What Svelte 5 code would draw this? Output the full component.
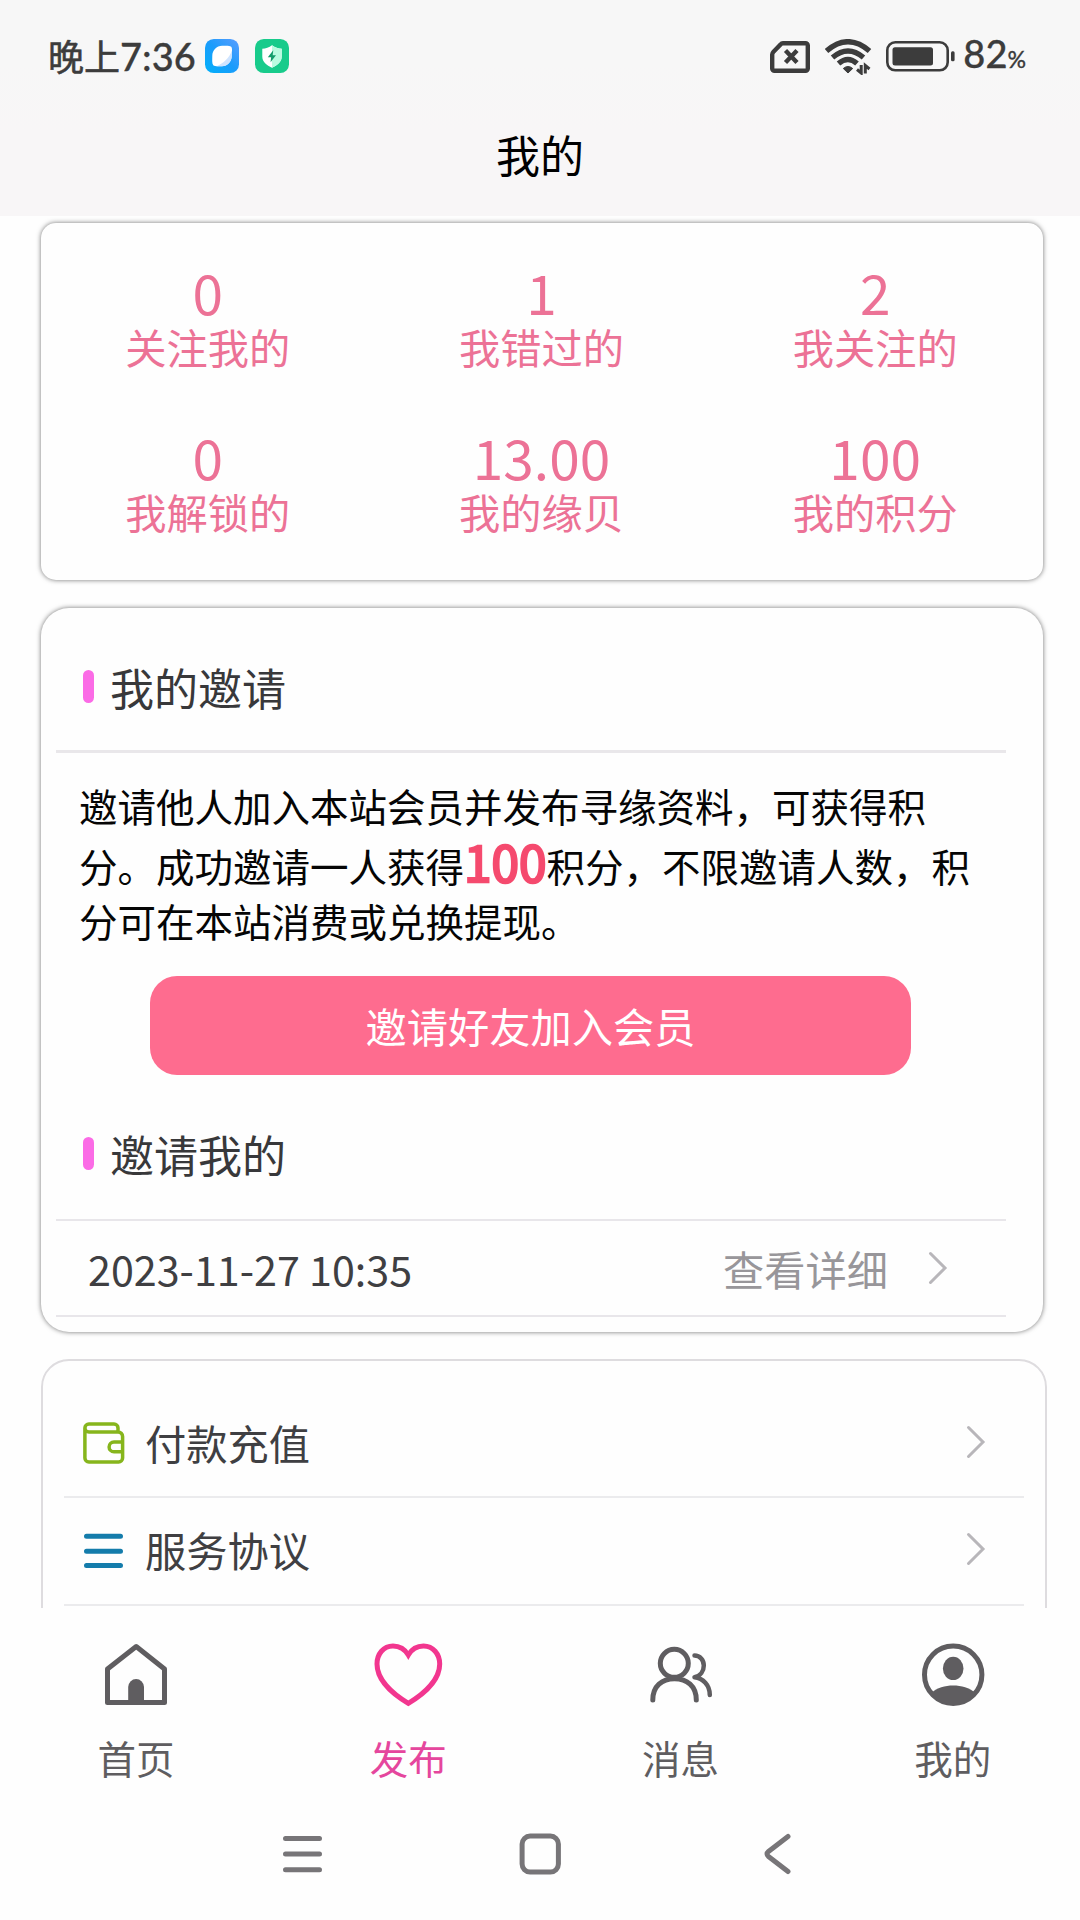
<script>
  const stats = [
    { value: '0', label: '关注我的' },
    { value: '1', label: '我错过的' },
    { value: '2', label: '我关注的' },
    { value: '0', label: '我解锁的' },
    { value: '13.00', label: '我的缘贝' },
    { value: '100', label: '我的积分' }
  ]
  const menu = [
    { icon: 'wallet', label: '付款充值' },
    { icon: 'list', label: '服务协议' }
  ]
  const tabs = [
    { icon: 'home', label: '首页' },
    { icon: 'heart', label: '发布', active: true },
    { icon: 'users', label: '消息' },
    { icon: 'person', label: '我的' }
  ]
</script>

{#snippet chevron()}
  <svg class="chevron" width="20" height="34" viewBox="0 0 20 34">
    <path d="M2.5 2.5 L17 17 L2.5 31.5" />
  </svg>
{/snippet}

<div class="page">
  <header>
    <div class="status">
      <span class="clock"><span class="cjk">晚上</span>7:36</span>
      <svg class="app" width="34" height="34" viewBox="0 0 35 35">
        <defs>
          <linearGradient id="blue" x1="0" y1="1" x2="1" y2="0">
            <stop offset="0" stop-color="#00b0fa" />
            <stop offset="0.5" stop-color="#1b9cfb" />
            <stop offset="1" stop-color="#5a9dff" />
          </linearGradient>
        </defs>
        <rect width="35" height="35" rx="9" fill="url(#blue)" />
        <path d="M17.5 7 C21 7 25 6.5 27 8 C28.5 10 27.500 14 27.500 17.500 C27.500 23.500 23 28 17.500 28 C14 28 10 28.500 8.500 27 C7 25 7.500 21 7.500 17.500 C7.500 11.500 12 7 17.500 7Z" fill="#fff" />
        <path d="M27.500 17.500 C27.500 23.500 23 28 17.500 28 C16 28 14 28.300 12 28 C19 25 25 19 27.700 12Z" fill="#cfe4ff" />
      </svg>
      <svg class="app second" width="34" height="34" viewBox="0 0 35 35">
        <rect width="35" height="35" rx="9" fill="#18cb8b" />
        <path d="M17.500 6.500 C20.500 9 24 10 27.500 10 V18 C27.500 23.500 23 27 17.500 29.500 C12 27 7.500 23.500 7.500 18 V10 C11 10 14.500 9 17.500 6.500Z" fill="#fff" />
        <path d="M17.500 6.500 C20.500 9 24 10 27.500 10 V18 C27.500 23.500 23 27 17.500 29.500Z" fill="#b9fbe0" />
        <path d="M18.800 11.500 L13.200 18.800 H16.600 L16 24 L21.600 16.600 H18.200Z" fill="#129c6b" />
      </svg>

      <svg class="sim" width="40" height="32" viewBox="0 0 40 32">
        <path d="M13 2.200 H35.500 A2.300 2.300 0 0 1 37.800 4.500 V27.500 A2.300 2.300 0 0 1 35.500 29.800 H4.500 A2.300 2.300 0 0 1 2.200 27.500 V13.500 Q2.200 12 3.500 10.700 L10.500 3.500 Q11.500 2.200 13 2.200Z" />
        <path d="M15.500 9.500 L27 21.500 M27 9.500 L15.500 21.500" />
      </svg>
      <svg class="wifi" width="47" height="36" viewBox="0 0 47 36">
        <path d="M1.500 12 Q23 -6.500 44.500 12" />
        <path d="M7.500 18.500 Q23 5.500 38.500 18.500" />
        <path d="M13.500 24.500 Q23 16.500 32 24.500" />
        <path class="solid" d="M18.300 29.500 Q23 25.500 27.700 29.500 L23 34Z" />
        <path class="arrows" d="M36.200 26 V34 L32 30.500 M40.300 34.500 V26.500 L44.500 30" />
      </svg>
      <svg class="battery" width="69" height="31" viewBox="0 0 69 31">
        <rect x="1.300" y="1.300" width="60.400" height="28" rx="8" fill="none" stroke="#3c3c3c" stroke-width="2.600" />
        <rect x="6.500" y="6.200" width="40.500" height="18.200" rx="2.500" fill="#3c3c3c" />
        <rect x="65" y="10.300" width="3.600" height="10" rx="1.500" fill="#3c3c3c" />
      </svg>
      <span class="percent">82<small>%</small></span>
    </div>
    <h1>我的</h1>
  </header>

  <main>
    <section class="card stats">
      {#each stats as stat}
        <div class="stat">
          <div class="value">{stat.value}</div>
          <div class="label">{stat.label}</div>
        </div>
      {/each}
    </section>

    <section class="card invite">
      <h2 class="thick">我的邀请</h2>
      <p>邀请他人加入本站会员并发布寻缘资料，可获得积分。成功邀请一人获得<b>100</b>积分，不限邀请人数，积分可在本站消费或兑换提现。</p>
      <button>邀请好友加入会员</button>
      <h2>邀请我的</h2>
      <div class="record">
        <span class="date">2023-11-27 10:35</span>
        <span class="detail">查看详细</span>
        {@render chevron()}
      </div>
    </section>

    <section class="menu">
      {#each menu as item}
        <div class="item">
          {#if item.icon === 'wallet'}
            <svg width="42" height="42" viewBox="0 0 42 42" fill="none" stroke="#86b51c" stroke-width="3.500">
              <path d="M1.900 6 V36 A4 4 0 0 0 5.900 40 H35.600 A4 4 0 0 0 39.600 36 V14.500 A4.500 4.500 0 0 0 35.100 10 H5.900 A4 4 0 0 1 5.900 2 H31 A4 4 0 0 1 35 6 V10" />
              <path d="M39.600 20 H31 A4.900 4.900 0 0 0 31 29.800 H39.600" />
            </svg>
          {:else}
            <svg width="42" height="42" viewBox="0 0 42 42" fill="none" stroke="#147cab" stroke-width="5" stroke-linecap="round">
              <path d="M3.500 6.300 H37.500 M3.500 21.200 H37.500 M3.500 35.500 H37.500" />
            </svg>
          {/if}
          <span>{item.label}</span>
          {@render chevron()}
        </div>
      {/each}
    </section>
  </main>

  <nav>
    {#each tabs as tab}
      <div class="tab" class:active={tab.active}>
        <svg width="72" height="66" viewBox="0 0 72 66">
          {#if tab.icon === 'home'}
            <path d="M36.200 4.500 L64.500 27 V60.500 H7.500 V27Z" />
            <path class="fill" d="M28.200 61 V45 A7.900 7.900 0 0 1 44 45 V61Z" />
          {:else if tab.icon === 'heart'}
            <path d="M36.300 13 C33 7.500 27.500 4 21 4 C11.500 4 5 12 5 22 C5 37 19 51 36.300 61.300 C53.600 51 67.700 37 67.700 22 C67.700 12 61 4 51.500 4 C45 4 39.500 7.500 36.300 13Z" />
          {:else if tab.icon === 'users'}
            <circle cx="29.300" cy="21.300" r="14" />
            <path d="M7.800 58 C7.800 44 17 36.800 29.500 36.800 S51.300 44 51.300 58" />
            <path class="thin" d="M49.500 13.500 C55 13.500 58.800 18 58.800 23.500 C58.800 29 55.500 34 49.500 35.300 C58 36.300 64.800 43 64.800 53" />
          {:else}
            <circle cx="36.200" cy="32.800" r="28.700" />
            <ellipse class="fill" cx="36.200" cy="26.400" rx="10.300" ry="11.700" />
            <path class="fill" d="M14.500 51 C20 45.500 28 43.500 36.200 43.500 S52.500 45.500 58 51 C53 58 45 62.500 36.200 62.500 S19.500 58 14.500 51Z" />
          {/if}
        </svg>
        <span>{tab.label}</span>
      </div>
    {/each}
  </nav>

  <footer>
    <svg width="42" height="42" viewBox="0 0 42 42"><path d="M4.500 5.500 H38.500 M4.500 21.100 H38.500 M4.500 36.700 H38.500" /></svg>
    <svg width="42" height="42" viewBox="0 0 42 42"><rect x="3.100" y="3.100" width="36.300" height="36" rx="8" /></svg>
    <svg width="42" height="42" viewBox="0 0 42 42"><path d="M31 3.500 L11.500 18.500 Q8.500 21 11.500 23.500 L31 38.500" /></svg>
  </footer>
</div>

<style>
  :global(body) {
    margin: 0;
    background: #fefefe;
  }
  .page {
    width: 1080px;
    height: 1920px;
    overflow: hidden;
    display: flex;
    flex-direction: column;
    font-family: "Noto Sans CJK SC", sans-serif;
    color: #3f3f42;
  }
  svg {
    flex: none;
    display: block;
  }

  header {
    flex: none;
    height: 216px;
    background: linear-gradient(#f7f7f7 30%, #f8f6f7 60%);
  }
  .status {
    display: flex;
    align-items: center;
    height: 111px;
    padding: 0 54px 0 48px;
    color: #3c3c3c;
  }
  .clock, .percent {
    font-family: Lato, sans-serif;
    font-weight: 500;
    font-size: 38px;
    line-height: 48px;
    -webkit-text-stroke: 0.3px #3c3c3c;
    white-space: nowrap;
  }
  .clock {
    width: 156.5px;
  }
  .cjk {
    font-family: "Noto Sans CJK SC", sans-serif;
    font-size: 36px;
    font-weight: 400;
    line-height: 40px;
    -webkit-text-stroke: 0.6px #3c3c3c;
  }
  .percent small {
    font-size: 23px;
  }
  .app.second {
    margin-left: 16px;
  }
  .sim {
    margin: 3px 0 0 auto;
    fill: none;
    stroke: #3c3c3c;
    stroke-width: 4.4;
  }
  .wifi {
    margin: 2px 0 0 15px;
    fill: none;
    stroke: #3c3c3c;
    stroke-width: 5.4;
  }
  .wifi .solid {
    fill: #3c3c3c;
    stroke-width: 1;
  }
  .wifi .arrows {
    stroke-width: 3;
  }
  .battery {
    margin: 1px 8px 0 14px;
  }
  h1 {
    margin: 13px 0 0;
    font-size: 44px;
    font-weight: 400;
    line-height: 60px;
    text-align: center;
    color: #000;
  }

  main {
    flex: none;
    height: 1392px;
    overflow: hidden;
  }
  .card {
    box-sizing: border-box;
    width: 1002px;
    margin-left: 41px;
    background: #fefefe;
    box-shadow: 0 0 5px rgba(0, 0, 0, 0.55);
  }
  .stats {
    display: grid;
    grid-template-columns: repeat(3, 1fr);
    grid-auto-rows: 165px;
    height: 357px;
    margin-top: 7px;
    padding: 38px 1px 0 0;
    border-radius: 15px;
    text-align: center;
    color: #ec7296;
  }
  .value {
    font-size: 55px;
    line-height: 60px;
  }
  .label {
    font-size: 41.25px;
    line-height: 50px;
  }

  .invite {
    height: 724px;
    margin-top: 27.5px;
    padding: 16px 37px 0 15px;
    border-radius: 28px;
  }
  h2 {
    display: flex;
    align-items: center;
    box-sizing: border-box;
    height: 130px;
    margin: 0;
    padding: 0 0 2px 27px;
    border-bottom: 2px solid #e8e6ea;
    font-size: 44px;
    font-weight: 400;
    line-height: 60px;
    color: #38383a;
  }
  h2::before {
    content: "";
    width: 11px;
    height: 33px;
    margin-right: 16px;
    border-radius: 5.5px;
    background: #fb6be6;
  }
  h2.thick {
    height: 129px;
    padding-bottom: 0;
    border-bottom: 3px solid #e9e7ea;
  }
  p {
    width: 905px;
    margin: 25px 0 0 23px;
    font-size: 38.5px;
    line-height: 55px;
    color: #050505;
  }
  b {
    font-size: 49.5px;
    font-weight: 400;
    line-height: 55px;
    color: #f54a6e;
    -webkit-text-stroke: 2.4px #f54a6e;
  }
  button {
    display: block;
    width: 761px;
    height: 99px;
    margin: 28px 0 16px 94px;
    padding: 0;
    border: 0;
    border-radius: 27px;
    background: #fe6c8f;
    color: #fff;
    font-family: inherit;
    font-size: 41.25px;
    line-height: 99px;
  }
  .record {
    display: flex;
    align-items: center;
    height: 94px;
    padding: 0 58px 0 32px;
    border-bottom: 2px solid #e8e6ea;
    font-size: 41.25px;
    line-height: 60px;
  }
  .detail {
    margin: 0 40px 0 auto;
    color: #98969a;
  }
  .chevron {
    fill: none;
    stroke: #b8b6ba;
    stroke-width: 3;
    stroke-linecap: round;
  }

  .menu {
    box-sizing: border-box;
    width: 1006px;
    height: 400px;
    margin: 27px 0 0 41px;
    padding: 30px 21px 0;
    border: 2px solid #dedcdf;
    border-radius: 28px;
  }
  .item {
    display: flex;
    align-items: center;
    box-sizing: border-box;
    height: 107.5px;
    padding: 0 38px 0 19px;
    border-bottom: 2px solid #ebebed;
    font-size: 41.25px;
    line-height: 60px;
  }
  .item span {
    flex: 1;
    margin: 0 0 3px 20px;
  }
  .item .chevron {
    margin-bottom: 3px;
  }

  /* the tab bar runs a little past the right edge of the screen */
  nav {
    flex: none;
    display: flex;
    width: 1089px;
    height: 192px;
  }
  .tab {
    flex: 1;
    display: flex;
    flex-direction: column;
    align-items: center;
    padding-top: 34px;
    font-size: 38.5px;
    line-height: 50px;
    color: #5f5d60;
  }
  .tab span {
    margin-top: 24px;
  }
  .tab svg {
    fill: none;
    stroke: #5f5d60;
    stroke-width: 5;
    stroke-linecap: round;
    stroke-linejoin: round;
  }
  .tab .fill {
    fill: #5f5d60;
    stroke: none;
  }
  .tab .thin {
    stroke-width: 4.5;
  }
  .tab.active {
    color: #e5469d;
  }
  .tab.active svg {
    stroke: #f2368f;
    stroke-linejoin: miter;
  }

  footer {
    display: flex;
    justify-content: center;
    gap: 196px;
    padding-top: 33px;
  }
  footer svg {
    fill: none;
    stroke: #777578;
    stroke-width: 5;
    stroke-linecap: round;
  }
</style>
